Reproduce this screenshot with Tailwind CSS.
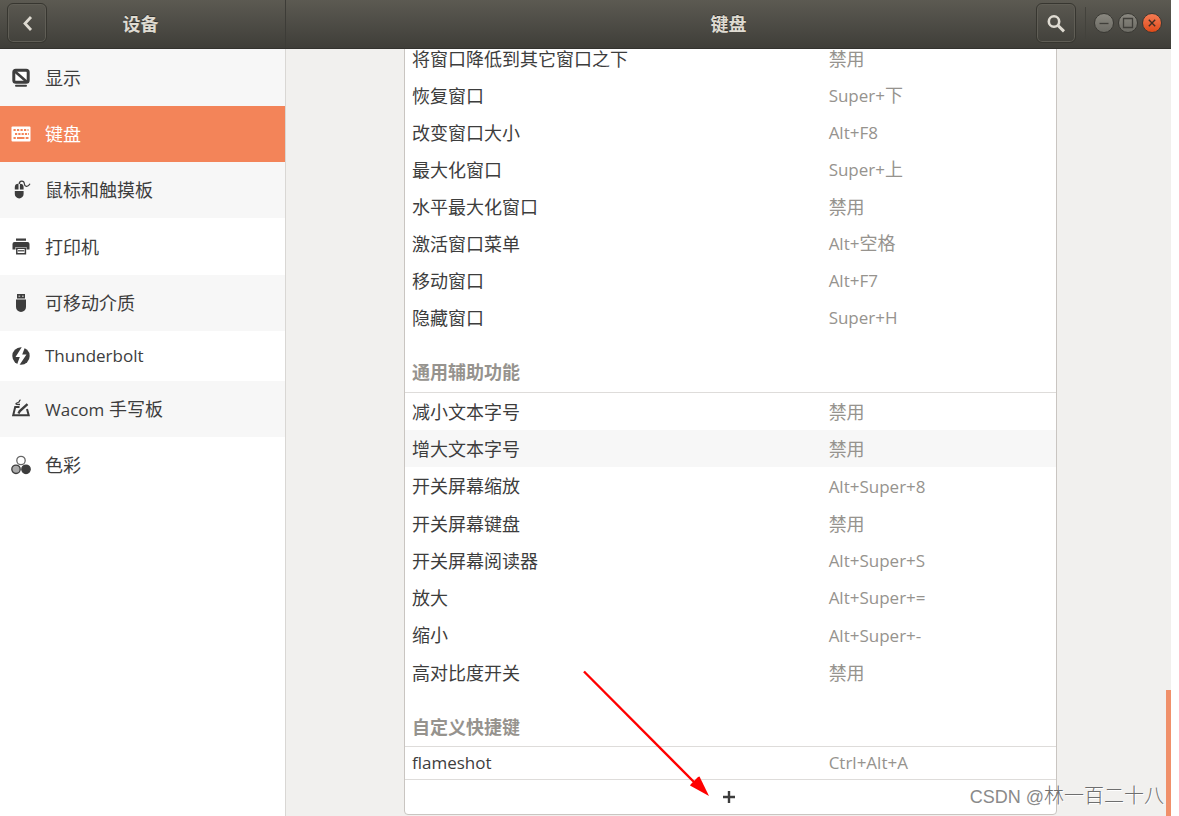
<!DOCTYPE html>
<html lang="zh-CN">
<head>
<meta charset="utf-8">
<meta name="viewport" content="width=device-width, initial-scale=1">
<title>键盘</title>
<script src="https://cdn.jsdelivr.net/npm/@tailwindcss/browser@4"></script>
</head>
<body class="h-screen overflow-hidden bg-white pr-2 font-['Open_Sans','Noto_Sans_CJK_SC',sans-serif] text-[18px] leading-6 text-[#3d3d3d]">
<div class="relative flex h-full flex-col bg-[#f1f0ee]">

  <header class="flex h-[49px] shrink-0 border-b border-b-[#33322e] bg-linear-to-b from-[#5c5a52] to-[#3f3e39] text-[#dfdbd2]">
    <div class="relative flex w-[286px] shrink-0 items-center justify-center border-r border-[#3d3c37] pr-1">
      <button type="button" aria-label="返回" class="absolute top-[3px] left-[7px] flex size-10 items-center justify-center rounded-md border border-[#373630] shadow-[inset_0_0_0_1px_#605e56]">
        <svg class="size-5" viewBox="0 0 20 20" fill="none" stroke="currentColor" stroke-width="2.8" aria-hidden="true"><path d="M14 4 8 10.500l6 6.500"/></svg>
      </button>
      <h2 class="font-bold text-shadow-[0_-1px_0_#33322e]">设备</h2>
    </div>
    <div class="relative flex flex-1 items-center justify-center">
      <h1 class="font-bold text-shadow-[0_-1px_0_#33322e]">键盘</h1>
      <div class="absolute top-[3px] right-[9px] flex items-center">
        <button type="button" aria-label="搜索" class="flex size-10 items-center justify-center rounded-md border border-[#373630] shadow-[inset_0_0_0_1px_#605e56]">
          <svg class="size-5" viewBox="0 0 20 20" fill="none" stroke="currentColor" aria-hidden="true"><circle cx="8" cy="8.500" r="5.2" stroke-width="2.6"/><path d="m12 12.500 6 5.8" stroke-width="3"/></svg>
        </button>
        <span class="mr-2 ml-[9px] h-8 w-px bg-[#43423c]"></span>
        <span class="flex gap-1">
          <button type="button" aria-label="最小化" class="size-5 rounded-full border border-[#3a3934] bg-linear-to-b from-[#8a8880] to-[#6c6b64] text-[#403f3a]"><svg viewBox="0 0 18 18" fill="none" stroke="currentColor" stroke-width="1.3" aria-hidden="true"><path d="M4.5 9.5h9"/></svg></button>
          <button type="button" aria-label="最大化" class="size-5 rounded-full border border-[#3a3934] bg-linear-to-b from-[#8a8880] to-[#6c6b64] text-[#403f3a]"><svg viewBox="0 0 18 18" fill="none" stroke="currentColor" stroke-width="1.3" aria-hidden="true"><path d="M4.5 4.5h9v9h-9z"/></svg></button>
          <button type="button" aria-label="关闭" class="size-5 rounded-full border border-[#3a3934] bg-linear-to-b from-[#f47b52] to-[#df4a16] text-[#3f2d22]"><svg viewBox="0 0 18 18" fill="none" stroke="currentColor" stroke-width="1.4" aria-hidden="true"><path d="m5.8 5.8 6.4 6.4m0-6.4-6.4 6.4"/></svg></button>
        </span>
      </div>
    </div>
  </header>

  <div class="flex min-h-0 flex-1">
    <nav class="w-[286px] shrink-0 border-r border-[#d9d7d4] bg-white">
      <ul>
        <li><a href="#" class="flex h-[57px] items-center gap-[14px] bg-[#f7f7f7] pl-[11px]">
          <svg class="size-5" viewBox="0 0 20 20" fill="none" stroke="currentColor" aria-hidden="true"><rect x="2.800" y="2.300" width="14.400" height="12" rx="2" fill="#fff" stroke-width="3"/><path d="m4 3.500 12 10.500" stroke-width="2.600"/><path d="M5 17.800h10" stroke-width="2" stroke-linecap="round"/></svg>
          <span>显示</span></a></li>
        <li><a href="#" aria-current="page" class="flex h-14 items-center gap-[14px] bg-[#f38459] pl-[11px] text-white">
          <svg class="size-5" viewBox="0 0 20 20" aria-hidden="true"><rect x="0.5" y="2.5" width="19" height="15" rx="1" fill="currentColor"/><path d="M2.5 6h15" stroke="#f38459" stroke-width="2.2" stroke-dasharray="2.2 1.3"/><path d="M4 10h14" stroke="#f38459" stroke-width="2.2" stroke-dasharray="2.2 1.1"/><path d="M2.5 14h2.3m1.2 0h7.5m1.2 0h2.8" stroke="#f38459" stroke-width="2"/></svg>
          <span>键盘</span></a></li>
        <li><a href="#" class="flex h-14 items-center gap-[14px] bg-[#f7f7f7] pl-[11px]">
          <svg class="size-5" viewBox="0 0 20 20" aria-hidden="true"><path d="M3.800 11h8.800v3a4.400 4.400 0 0 1-8.800 0zM7.500 9.500H3.800V7A3.500 3.500 0 0 1 7.500 3.800zM8.900 9.500h3.700V7a3.500 3.500 0 0 0-3.700-3.200z" fill="currentColor"/><path d="M8.200 4C8.200.3 13 .2 13.300 3.500s3.500 4.200 5.700.3" fill="none" stroke="currentColor" stroke-width="1.200"/></svg>
          <span>鼠标和触摸板</span></a></li>
        <li><a href="#" class="flex h-[57px] items-center gap-[14px] pl-[11px]">
          <svg class="size-5" viewBox="0 0 20 20" aria-hidden="true"><path d="M5 1.500h10v2.300H5zM3.500 5h13q2 0 2 2v5.500h-3V10h-11v2.500h-3V7q0-2 2-2z" fill="currentColor"/><path d="M5.800 11.200h8.600V16.800H5.800z" fill="none" stroke="currentColor" stroke-width="1.500"/><path d="M7 13.800h6.200" stroke="currentColor" stroke-width="1.200"/></svg>
          <span>打印机</span></a></li>
        <li><a href="#" class="flex h-14 items-center gap-[14px] bg-[#f7f7f7] pl-[11px]">
          <svg class="size-5" viewBox="0 0 20 20" aria-hidden="true"><path d="M6 1h8v4.500H6zM5 6.500h10v7.500a5 5 0 0 1-10 0z" fill="currentColor"/><path d="M7.500 2.500h1.700v1.500H7.500zM11 2.500h1.700v1.500H11z" fill="#aaa"/></svg>
          <span>可移动介质</span></a></li>
        <li><a href="#" class="flex h-[50px] items-center gap-[14px] pl-[11px]">
          <svg class="size-5" viewBox="0 0 20 20" aria-hidden="true"><circle cx="10" cy="10" r="8.700" fill="currentColor"/><path d="M11.500 0 4.500 11h4.300L5.500 20h2.300L15.500 8.500h-4.300L14.500 0z" fill="#fff"/></svg>
          <span class="text-[17px]">Thunderbolt</span></a></li>
        <li><a href="#" class="flex h-14 items-center gap-[14px] bg-[#f7f7f7] pl-[11px]">
          <svg class="size-5" viewBox="0 0 20 20" fill="none" stroke="currentColor" aria-hidden="true"><path d="M8.500 8H4.200L2.200 16.300h15.500L16 10" stroke-width="2"/><path d="M16.500 5.200 8.800 12l-1.300 2.500" stroke-width="2.400"/><path d="M9.500.8C7 2 10 2.500 7 3.500S4 5.500 9 5.500" stroke-width="1.300"/></svg>
          <span><span class="text-[17px]">Wacom</span> 手写板</span></a></li>
        <li><a href="#" class="flex h-14 items-center gap-[14px] pl-[11px]">
          <svg class="size-5" viewBox="0 0 20 20" stroke="currentColor" aria-hidden="true"><circle cx="10" cy="5.500" r="4.200" fill="#fff" stroke="#666" stroke-width="1.300"/><circle cx="5" cy="14.300" r="4.200" fill="#aaa" stroke-width="1.300"/><circle cx="15" cy="14.300" r="4.200" fill="currentColor" stroke-width="1.300"/></svg>
          <span>色彩</span></a></li>
      </ul>
    </nav>

    <main class="flex flex-1 flex-col justify-end overflow-hidden pb-px pl-1">
      <div class="mx-auto w-full max-w-[653px] rounded-b border border-[#c9c5c1] bg-white">
        <table class="w-full table-fixed border-separate border-spacing-0 text-left">
          <colgroup><col class="w-[64%]"><col></colgroup>
          <tbody class="[&_td]:h-[37px] [&_td]:px-[7px] [&_td]:py-0 [&_td:last-child]:text-[#96938e]">
            <tr><td>将窗口降低到其它窗口之下</td><td>禁用</td></tr>
            <tr><td>恢复窗口</td><td><span class="text-[17px]">Super+</span>下</td></tr>
            <tr><td>改变窗口大小</td><td><span class="text-[17px]">Alt+F8</span></td></tr>
            <tr><td>最大化窗口</td><td><span class="text-[17px]">Super+</span>上</td></tr>
            <tr><td>水平最大化窗口</td><td>禁用</td></tr>
            <tr><td>激活窗口菜单</td><td><span class="text-[17px]">Alt+</span>空格</td></tr>
            <tr><td>移动窗口</td><td><span class="text-[17px]">Alt+F7</span></td></tr>
            <tr><td>隐藏窗口</td><td><span class="text-[17px]">Super+H</span></td></tr>
          </tbody>
          <tbody class="[&_td]:h-[37px] [&_td]:px-[7px] [&_td]:py-0 [&_td:last-child]:text-[#96938e] [&>tr:nth-child(4n)>td]:h-[38px]">
            <tr><th colspan="2" scope="rowgroup" class="h-[57px] border-b border-[#dedcda] px-[7px] pt-4 pb-0 font-bold text-[#96938e]">通用辅助功能</th></tr>
            <tr class="[&>td]:border-t [&>td]:border-white"><td>减小文本字号</td><td>禁用</td></tr>
            <tr class="bg-[#f7f7f7]"><td>增大文本字号</td><td>禁用</td></tr>
            <tr><td>开关屏幕缩放</td><td><span class="text-[17px]">Alt+Super+8</span></td></tr>
            <tr><td>开关屏幕键盘</td><td>禁用</td></tr>
            <tr><td>开关屏幕阅读器</td><td><span class="text-[17px]">Alt+Super+S</span></td></tr>
            <tr><td>放大</td><td><span class="text-[17px]">Alt+Super+=</span></td></tr>
            <tr><td>缩小</td><td><span class="text-[17px]">Alt+Super+-</span></td></tr>
            <tr><td>高对比度开关</td><td>禁用</td></tr>
          </tbody>
          <tbody>
            <tr><th colspan="2" scope="rowgroup" class="h-14 border-b border-[#dedcda] px-[7px] pt-4 pb-0 font-bold text-[#96938e]">自定义快捷键</th></tr>
            <tr><td class="h-[33px] border-b border-[#dedcda] px-[7px] py-0 text-[17px]">flameshot</td><td class="border-b border-[#dedcda] px-[7px] py-0 text-[17px] text-[#96938e]">Ctrl+Alt+A</td></tr>
          </tbody>
        </table>
        <button type="button" aria-label="添加快捷键" class="flex h-[34px] w-full items-center justify-center pr-[3px]">
          <svg class="size-3" viewBox="0 0 12 12" stroke="currentColor" stroke-width="2.400" aria-hidden="true"><path d="M6 0v12M0 6h12"/></svg>
        </button>
      </div>
    </main>
  </div>

  <div class="absolute right-0 bottom-0 h-[126px] w-[5px] bg-[#f0906a]"></div>
  <svg class="pointer-events-none absolute top-[670px] left-[582px] h-[128px] w-[128px]" viewBox="0 0 128 128" aria-hidden="true"><path d="M2 1.500 114 114" stroke="#f00" stroke-width="2.400"/><path d="m127 126-19-10.500 1-1.500 7-7 1.500-.5z" fill="#f00"/></svg>
  <p class="pointer-events-none absolute right-[7px] bottom-[3px] text-[20px] leading-8 whitespace-nowrap text-[#8a8a8a] text-shadow-[1px_1px_0_#ffffff]"><span class="font-['Liberation_Sans',sans-serif] text-[18px]">CSDN @</span><span class="font-light text-[#6e6e6e]">林一百二十八</span></p>
</div>
</body>
</html>
